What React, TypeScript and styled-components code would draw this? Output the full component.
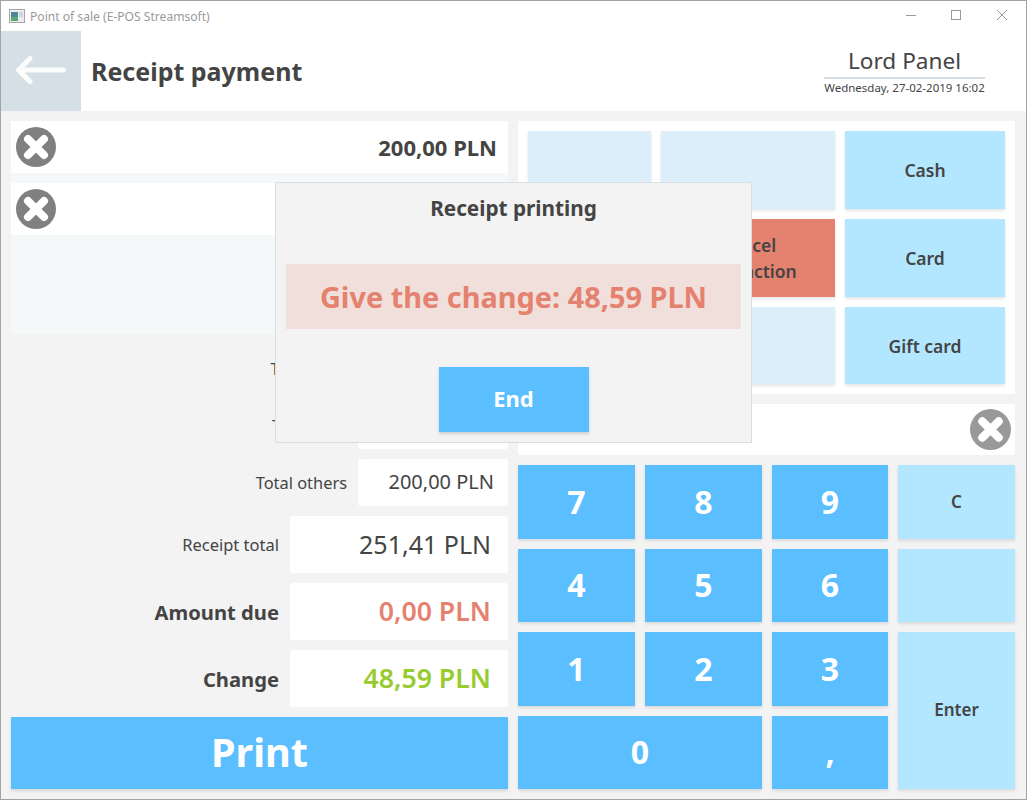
import React from 'react';
import styled, { createGlobalStyle } from 'styled-components';

const FONT = '"Noto Sans", "Open Sans", sans-serif';
const INK = '#444444';
const BLUE = '#5bbeff';
const SKY = '#b3e6ff';
const PALE = '#dbeefa';
const RED = '#e5826f';
const STEEL = '#d4e0e5';

const GlobalStyle = createGlobalStyle`
    html, body {
        margin: 0;
        padding: 0;
        background: #ffffff;
    }
    * {
        box-sizing: border-box;
    }
`;

const Window = styled.div`
    position: relative;
    width: 1027px;
    height: 800px;
    border: 1px solid #a3a3a3;
    background: #f3f3f3;
    font-family: ${FONT};
    color: ${INK};
    display: flex;
    flex-direction: column;
    overflow: hidden;
`;

const TitleBar = styled.div`
    height: 30px;
    flex: none;
    background: #ffffff;
    display: flex;
    align-items: center;
    padding-left: 8px;
`;

const TitleText = styled.span`
    margin-left: 5px;
    font-size: 12.1px;
    color: #9a9a9a;
`;

const WindowControls = styled.div`
    margin-left: auto;
    height: 100%;
    padding-right: 1px;
    display: grid;
    grid-template-columns: 44px 46px 46px;
`;

const WindowControl = styled.div`
    display: flex;
    align-items: center;
    justify-content: center;
    padding-bottom: 2px;
`;

const Header = styled.header`
    height: 80px;
    flex: none;
    background: #ffffff;
    display: flex;
    align-items: center;
`;

const BackButton = styled.div`
    width: 80px;
    height: 80px;
    background: ${STEEL};
    display: flex;
    align-items: center;
    justify-content: center;
`;

const PageTitle = styled.h1`
    margin: 0 0 0 10px;
    font-size: 25px;
    font-weight: 700;
`;

const UserBox = styled.div`
    margin-left: auto;
    margin-right: 41px;
    width: 161px;
    text-align: center;
`;

const UserName = styled.div`
    font-size: 22.6px;
    line-height: 31px;
    font-weight: 400;
    border-bottom: 2px solid ${STEEL};
    padding-bottom: 1px;
`;

const UserDate = styled.div`
    font-size: 11.5px;
    line-height: 18px;
    white-space: nowrap;
`;

const Body = styled.main`
    flex: 1;
    display: grid;
    grid-template-columns: 497px 497px;
    column-gap: 10px;
    padding: 10px 11px 9px 10px;
`;

const LeftColumn = styled.section`
    display: flex;
    flex-direction: column;
`;

const PaymentList = styled.div`
    height: 213px;
    flex: none;
    background: #f4f8f9;
    margin-bottom: 11px;
    display: flex;
    flex-direction: column;
    gap: 10px;
`;

const PaymentItem = styled.div`
    height: 52px;
    background: #ffffff;
    display: flex;
    align-items: center;
    padding: 0 11px 0 5px;
`;

const PaymentAmount = styled.span`
    margin-left: auto;
    font-size: 22px;
    font-weight: 700;
`;

const SummaryRow = styled.div<{ $height: number }>`
    height: ${p => p.$height}px;
    flex: none;
    margin-bottom: 10px;
    display: flex;
    align-items: center;
    justify-content: flex-end;
    gap: 11px;
`;

const SummaryLabel = styled.span<{ $size: number; $weight: number }>`
    font-size: ${p => p.$size}px;
    font-weight: ${p => p.$weight};
    white-space: nowrap;
`;

const SummaryValue = styled.div<{ $width: number; $size: number; $weight: number; $color?: string }>`
    width: ${p => p.$width}px;
    height: 100%;
    background: #ffffff;
    border-radius: 3px;
    display: flex;
    align-items: center;
    justify-content: flex-end;
    padding: 0 ${p => (p.$width > 200 ? 17 : 14)}px 2px 0;
    font-size: ${p => p.$size}px;
    font-weight: ${p => p.$weight};
    color: ${p => p.$color || INK};
    white-space: nowrap;
`;

const PrintButton = styled.div`
    height: 72px;
    padding-bottom: 2px;
    background: ${BLUE};
    color: #ffffff;
    font-size: 39.6px;
    font-weight: 700;
    display: flex;
    align-items: center;
    justify-content: center;
    box-shadow: 0 2px 3px rgba(0, 0, 0, 0.12);
`;

const RightColumn = styled.section`
    display: flex;
    flex-direction: column;
`;

const MethodPanel = styled.div`
    height: 273px;
    flex: none;
    background: #ffffff;
    padding: 10px;
    display: grid;
    grid-template-columns: 123px 174px 160px;
    grid-template-rows: 78px 78px 77px;
    gap: 10px;
`;

const Tile = styled.div<{ $bg: string }>`
    background: ${p => p.$bg};
    font-size: 17.5px;
    font-weight: 600;
    line-height: 26px;
    text-align: center;
    display: flex;
    align-items: center;
    justify-content: center;
    box-shadow: 0 2px 3px rgba(0, 0, 0, 0.1);
`;

const InputBar = styled.div`
    height: 51px;
    flex: none;
    margin: 10px 0;
    background: #ffffff;
    border-radius: 3px;
    display: flex;
    align-items: center;
    justify-content: flex-end;
    padding-right: 4px;
`;

const Keypad = styled.div`
    flex: none;
    display: grid;
    grid-template-columns: 117px 117px 116px 117px;
    grid-template-rows: 74px 73px 74px 73px;
    gap: 10px;
`;

const Key = styled.div<{ $wide?: boolean; $tall?: boolean; $light?: boolean }>`
    grid-column: ${p => (p.$wide ? 'span 2' : 'auto')};
    grid-row: ${p => (p.$tall ? 'span 2' : 'auto')};
    padding-bottom: 2px;
    background: ${p => (p.$light ? SKY : BLUE)};
    color: ${p => (p.$light ? INK : '#ffffff')};
    font-size: ${p => (p.$light ? '17px' : '32px')};
    font-weight: ${p => (p.$light ? 600 : 700)};
    display: flex;
    align-items: center;
    justify-content: center;
    box-shadow: 0 2px 3px rgba(0, 0, 0, 0.1);
`;

const Modal = styled.div`
    position: absolute;
    left: 274px;
    top: 181px;
    width: 477px;
    height: 261px;
    background: #f3f3f3;
    border: 1px solid ${STEEL};
    display: flex;
    flex-direction: column;
    align-items: center;
    padding: 0 10px;
`;

const ModalTitle = styled.div`
    height: 50px;
    margin-bottom: 31px;
    display: flex;
    align-items: center;
    font-size: 20.75px;
    font-weight: 700;
`;

const ModalNotice = styled.div`
    width: 100%;
    height: 65px;
    background: #f1dfdb;
    color: ${RED};
    font-size: 28.9px;
    font-weight: 700;
    display: flex;
    align-items: center;
    justify-content: center;
`;

const ModalButton = styled.div`
    margin-top: 38px;
    width: 150px;
    height: 65px;
    padding-bottom: 3px;
    background: ${BLUE};
    color: #ffffff;
    font-size: 22px;
    font-weight: 700;
    display: flex;
    align-items: center;
    justify-content: center;
    box-shadow: 0 2px 3px rgba(0, 0, 0, 0.15);
`;

const ClearIcon = ({ color = '#808080', size = 40 }: { color?: string; size?: number }) => (
    <svg width={size} height={size} viewBox="0 0 40 40">
        <circle cx="20" cy="20" r="20" fill={color} />
        <path d="M12 12 L28 28 M28 12 L12 28" stroke="#ffffff" strokeWidth="8" strokeLinecap="round" />
    </svg>
);

const AppIcon = () => (
    <svg width="16" height="14" viewBox="0 0 16 14">
        <rect x="0.5" y="0.5" width="15" height="13" fill="#ececec" stroke="#a5a5a5" />
        <rect x="2" y="3" width="7" height="5" fill="#4a8a96" />
        <rect x="2" y="8" width="7" height="4" fill="#5aa87a" />
        <rect x="10" y="3" width="4" height="5" fill="#c9d6dc" />
    </svg>
);

const keys: { label: string; wide?: boolean; tall?: boolean; light?: boolean }[] = [
    { label: '7' }, { label: '8' }, { label: '9' }, { label: 'C', light: true },
    { label: '4' }, { label: '5' }, { label: '6' }, { label: '', light: true },
    { label: '1' }, { label: '2' }, { label: '3' }, { label: 'Enter', tall: true, light: true },
    { label: '0', wide: true }, { label: ',' },
];

export default function App() {
    return (
        <Window>
            <GlobalStyle />
            <TitleBar>
                <AppIcon />
                <TitleText>Point of sale (E-POS Streamsoft)</TitleText>
                <WindowControls>
                    <WindowControl>
                        <svg width="10" height="10" viewBox="0 0 10 10"><path d="M0 5.5H10" stroke="#9a9a9a" /></svg>
                    </WindowControl>
                    <WindowControl>
                        <svg width="10" height="10" viewBox="0 0 10 10"><rect x="0.5" y="0.5" width="9" height="9" fill="none" stroke="#9a9a9a" /></svg>
                    </WindowControl>
                    <WindowControl>
                        <svg width="10" height="10" viewBox="0 0 10 10"><path d="M0 0L10 10M10 0L0 10" stroke="#9a9a9a" /></svg>
                    </WindowControl>
                </WindowControls>
            </TitleBar>
            <Header>
                <BackButton>
                    <svg width="52" height="30" viewBox="0 0 52 30">
                        <path d="M48.5 14H3.5M15 2.5L3.5 14L15 25.5" fill="none" stroke="#fbfcfc" strokeWidth="5" strokeLinecap="round" strokeLinejoin="round" />
                    </svg>
                </BackButton>
                <PageTitle>Receipt payment</PageTitle>
                <UserBox>
                    <UserName>Lord Panel</UserName>
                    <UserDate>Wednesday, 27-02-2019 16:02</UserDate>
                </UserBox>
            </Header>
            <Body>
                <LeftColumn>
                    <PaymentList>
                        <PaymentItem>
                            <ClearIcon />
                            <PaymentAmount>200,00 PLN</PaymentAmount>
                        </PaymentItem>
                        <PaymentItem>
                            <ClearIcon />
                        </PaymentItem>
                    </PaymentList>
                    <SummaryRow $height={47}>
                        <SummaryLabel $size={16.4} $weight={400}>Total cash</SummaryLabel>
                        <SummaryValue $width={150} $size={20} $weight={400} />
                    </SummaryRow>
                    <SummaryRow $height={47}>
                        <SummaryLabel $size={16.4} $weight={400}>Total card</SummaryLabel>
                        <SummaryValue $width={150} $size={20} $weight={400} />
                    </SummaryRow>
                    <SummaryRow $height={47}>
                        <SummaryLabel $size={16.4} $weight={400}>Total others</SummaryLabel>
                        <SummaryValue $width={150} $size={20} $weight={400}>200,00 PLN</SummaryValue>
                    </SummaryRow>
                    <SummaryRow $height={57}>
                        <SummaryLabel $size={16.5} $weight={400}>Receipt total</SummaryLabel>
                        <SummaryValue $width={218} $size={25} $weight={400}>251,41 PLN</SummaryValue>
                    </SummaryRow>
                    <SummaryRow $height={57}>
                        <SummaryLabel $size={20.2} $weight={700}>Amount due</SummaryLabel>
                        <SummaryValue $width={218} $size={26.7} $weight={600} $color={RED}>0,00 PLN</SummaryValue>
                    </SummaryRow>
                    <SummaryRow $height={57}>
                        <SummaryLabel $size={20.2} $weight={700}>Change</SummaryLabel>
                        <SummaryValue $width={218} $size={26.7} $weight={600} $color="#98cb2e">48,59 PLN</SummaryValue>
                    </SummaryRow>
                    <PrintButton>Print</PrintButton>
                </LeftColumn>
                <RightColumn>
                    <MethodPanel>
                        <Tile $bg={PALE} />
                        <Tile $bg={PALE} />
                        <Tile $bg={SKY}>Cash</Tile>
                        <Tile $bg={PALE} />
                        <Tile $bg={RED}>Cancel<br />transaction</Tile>
                        <Tile $bg={SKY}>Card</Tile>
                        <Tile $bg={PALE} />
                        <Tile $bg={PALE} />
                        <Tile $bg={SKY}>Gift card</Tile>
                    </MethodPanel>
                    <InputBar>
                        <ClearIcon color="#999999" size={41} />
                    </InputBar>
                    <Keypad>
                        {keys.map((k, i) => (
                            <Key key={i} $wide={k.wide} $tall={k.tall} $light={k.light}>{k.label}</Key>
                        ))}
                    </Keypad>
                </RightColumn>
            </Body>
            <Modal>
                <ModalTitle>Receipt printing</ModalTitle>
                <ModalNotice>Give the change: 48,59 PLN</ModalNotice>
                <ModalButton>End</ModalButton>
            </Modal>
        </Window>
    );
}
